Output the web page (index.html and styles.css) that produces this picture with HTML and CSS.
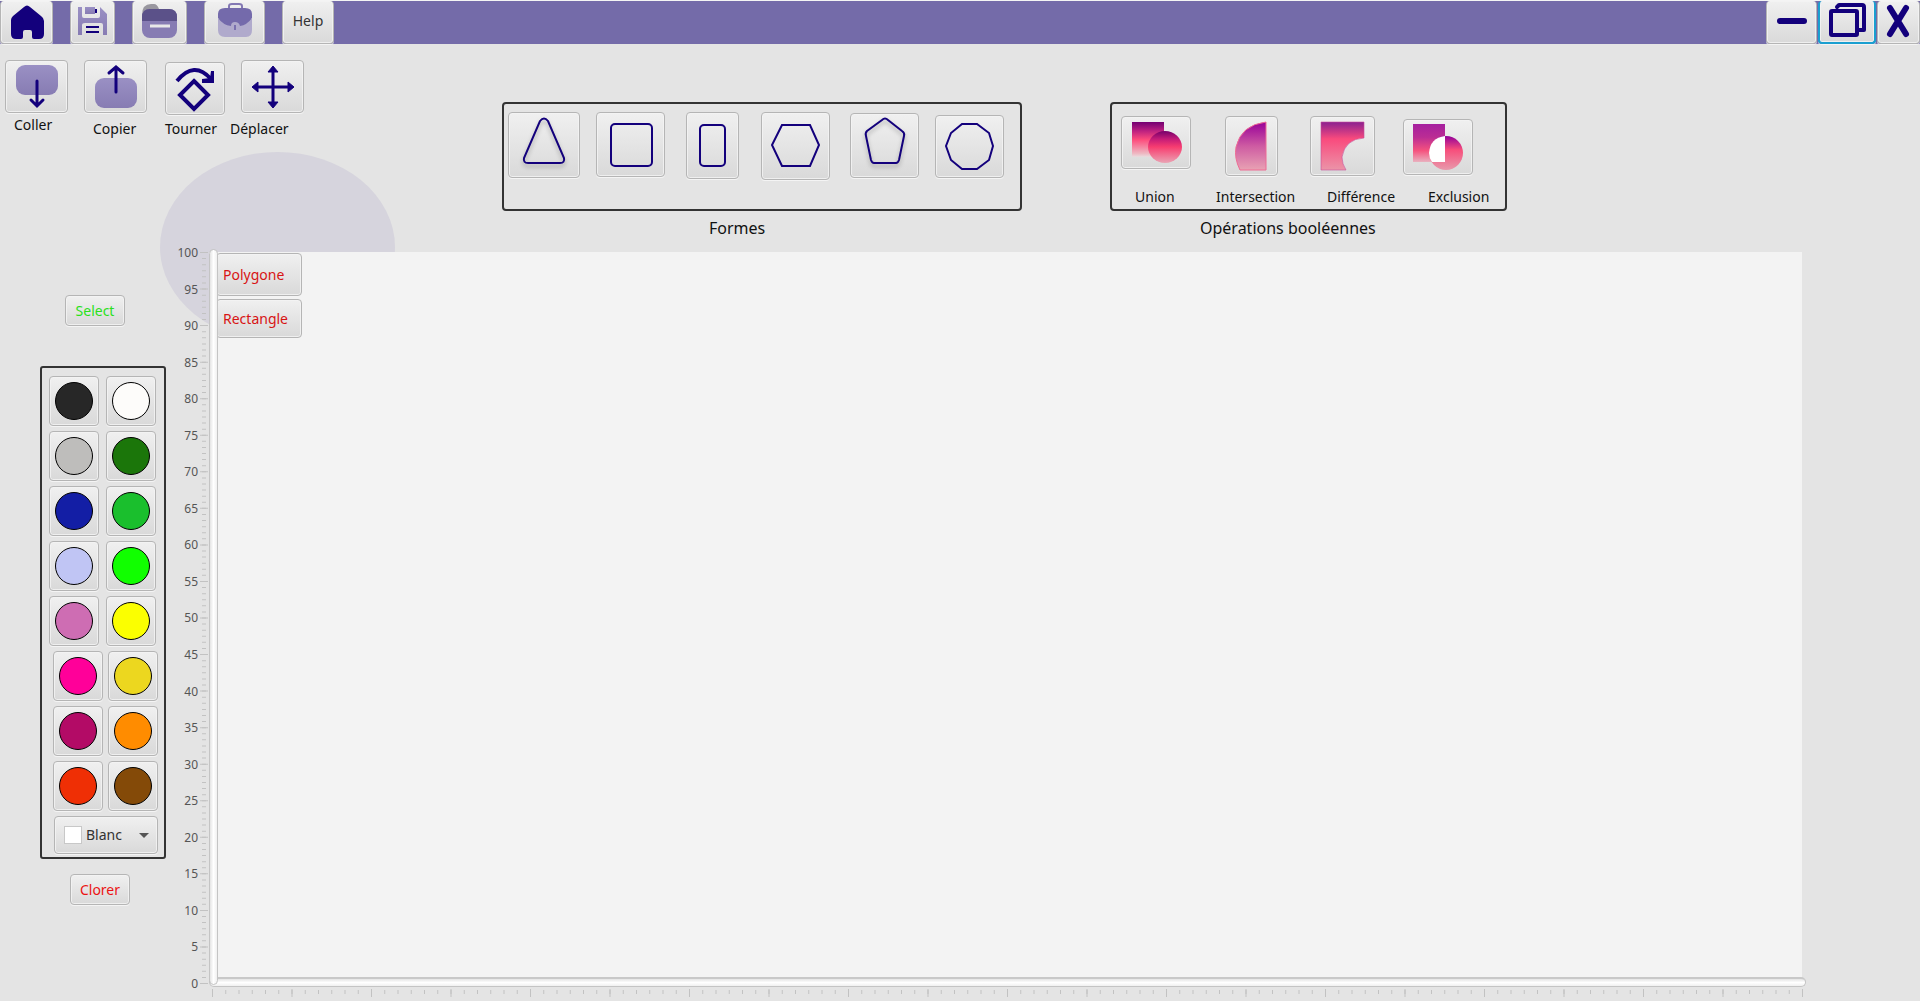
FILE: index.html
```html
<!DOCTYPE html>
<html lang="fr">
<head>
<meta charset="utf-8">
<title>Dessin</title>
<link rel="stylesheet" href="styles.css">
</head>
<body>
<header class="titlebar">
  <button class="btn bar-btn w-home" aria-label="Accueil"><svg width="51" height="42" viewBox="0 0 51 42"><path d="M10 19Q10 17 12 15L23 6Q26 3 29 6L40 15Q43 17 43 20V33Q43 38 38 38H33Q31 38 31 36V31Q31 29 29 29H24Q22 29 22 31V36Q22 38 20 38H15Q10 38 10 33Z" fill="#13007c"/></svg></button>
  <button class="btn bar-btn w-save" aria-label="Enregistrer"><svg width="43" height="42" viewBox="0 0 43 42"><defs><linearGradient id="lil" x1="0" y1="0" x2="0" y2="1"><stop offset="0" stop-color="#9a90c4"/><stop offset="1" stop-color="#877cb3"/></linearGradient></defs><path d="M7 6H11V15Q11 17 13 17H27Q29 17 29 15V6L36 13V34H32V24Q32 22 30 22H14Q11 22 11 24V34H7Z" fill="url(#lil)"/><path d="M14 6H24V13H14Z" fill="url(#lil)"/><path d="M25 8V12M15 26H28M15 31H28" stroke="#13007c" stroke-width="2"/></svg></button>
  <button class="btn bar-btn w-folder" aria-label="Ouvrir"><svg width="53" height="42" viewBox="0 0 53 42"><path d="M9 14Q9 3 18 3H21Q24 3 26 8L36 12V16H9Z" fill="#99979f"/><rect x="9" y="8" width="35" height="29" rx="8" fill="#877cb3"/><path d="M9 20V16Q9 8 17 8H36Q44 8 44 16V20Z" fill="#5b5189"/><path d="M17 25H37" stroke="#e8e8e8" stroke-width="3"/></svg></button>
  <button class="btn bar-btn w-case" aria-label="Projet"><svg width="59" height="42" viewBox="0 0 59 42"><path d="M24 7V5Q24 3 27 3H34Q37 3 37 5V7" fill="none" stroke="#8378b3" stroke-width="2"/><path d="M13 18V29Q13 36 20 36H41Q47 36 47 29V18Z" fill="#b0aacc"/><path d="M13 17V13Q13 7 20 7H40Q47 7 47 13V17Q42 24 35 25Q34 21 30 21Q26 21 26 25Q18 24 13 17Z" fill="#746aab"/><path d="M30 24V29" stroke="#7a70af" stroke-width="2"/></svg></button>
  <button class="btn bar-btn w-help">Help</button>
  <div class="window-controls">
    <button class="btn bar-btn w-min" aria-label="Réduire"><svg width="48" height="42" viewBox="0 0 48 42"><path d="M12 20H36" stroke="#13007c" stroke-width="6" stroke-linecap="round"/></svg></button>
    <button class="btn bar-btn w-max focused" aria-label="Restaurer"><svg width="54" height="42" viewBox="0 0 54 42"><g fill="none" stroke="#13007c" stroke-width="4" stroke-linejoin="round" stroke-linecap="round"><rect x="11" y="10" width="26" height="24" rx="1"/><path d="M17 6L19 4H42Q44 4 44 6V29H39"/></g></svg></button>
    <button class="btn bar-btn w-close" aria-label="Fermer"><svg width="40" height="42" viewBox="0 0 40 42"><path d="M11 7L27 33M27 7L11 33" stroke="#13007c" stroke-width="6" stroke-linecap="round"/></svg></button>
  </div>
</header>

<div class="halo"></div>

<section class="ribbon">
  <div class="tools">
    <div class="tool-buttons">
      <button class="btn w-tool" aria-labelledby="t1"><svg width="60" height="50" viewBox="0 0 60 50"><rect x="9" y="3" width="42" height="30" rx="9" fill="url(#lil)"/><path d="M30 19V43M24 38L30 44L36 38" fill="none" stroke="#13007c" stroke-width="3" stroke-linecap="round"/></svg></button>
      <button class="btn w-tool" aria-labelledby="t2"><svg width="60" height="50" viewBox="0 0 60 50"><rect x="9" y="16" width="42" height="30" rx="9" fill="url(#lil)"/><path d="M30 30V5M23 11L30 5L37 11" fill="none" stroke="#13007c" stroke-width="3" stroke-linecap="round"/></svg></button>
      <button class="btn w-turn" aria-labelledby="t3"><svg width="58" height="50" viewBox="0 0 58 50"><path d="M28 17L42 31L28 45L14 31Z" fill="none" stroke="#13007c" stroke-width="4"/><path d="M11 17Q28 -4 45 15" fill="none" stroke="#13007c" stroke-width="4"/><path d="M48 7V19H36V15L44 14L45 7Z" fill="#13007c"/></svg></button>
      <button class="btn w-tool" aria-labelledby="t4"><svg width="60" height="50" viewBox="0 0 60 50"><path d="M30 6V44M12 25H49" stroke="#13007c" stroke-width="3"/><path d="M30 4L35 10H25ZM30 46L25 40H35ZM9 25L15 20V30ZM51 25L45 20V30Z" fill="#13007c" stroke="#13007c" stroke-linejoin="round"/></svg></button>
    </div>
    <div class="tool-labels"><span id="t1" class="label-up">Coller</span><span id="t2">Copier</span><span id="t3">Tourner</span><span id="t4">Déplacer</span></div>
  </div>

  <figure class="group shapes">
    <div class="frame shape-frame">
      <button class="btn s-tri" aria-label="Triangle"><svg class="shadow" width="70" height="64" viewBox="0 0 70 64"><path d="M31 8Q35 3 39 8L55 45Q56 50 51 50H19Q14 50 15 45Z"/></svg></button>
      <button class="btn s-sq" aria-label="Carré"><svg width="67" height="63" viewBox="0 0 67 63"><rect x="14" y="11" width="41" height="42" rx="4"/></svg></button>
      <button class="btn s-rect" aria-label="Rectangle"><svg width="51" height="65" viewBox="0 0 51 65"><rect x="13" y="12" width="25" height="41" rx="4"/></svg></button>
      <button class="btn s-hex" aria-label="Hexagone"><svg width="67" height="66" viewBox="0 0 67 66"><path d="M20 12H48L57 32L48 53H20L10 32Z"/></svg></button>
      <button class="btn s-pent" aria-label="Pentagone"><svg class="shadow" width="67" height="63" viewBox="0 0 67 63"><path d="M31 6Q34 3 37 6L51 17Q54 19 53 22L48 46Q47 49 45 49H23Q21 49 20 46L15 22Q14 19 16 17Z"/></svg></button>
      <button class="btn s-deca" aria-label="Polygone"><svg width="67" height="61" viewBox="0 0 67 61"><path d="M26 8H41L53 17L57 30L53 44L41 53H26L15 44L10 30L15 17Z"/></svg></button>
    </div>
    <figcaption>Formes</figcaption>
  </figure>

  <figure class="group booleans">
    <div class="frame bool-frame">
      <svg width="0" height="0" class="defs"><defs>
        <linearGradient id="g1" x1="0" y1="0" x2="0" y2="1"><stop offset="0" stop-color="#730072"/><stop offset=".25" stop-color="#bb2080"/><stop offset=".5" stop-color="#fd4b7c"/><stop offset=".9" stop-color="#eeb8c2"/><stop offset="1" stop-color="#e8dddf"/></linearGradient>
        <linearGradient id="g2" x1="0" y1="0" x2="0" y2="1"><stop offset="0" stop-color="#75006b"/><stop offset=".25" stop-color="#c51b78"/><stop offset=".5" stop-color="#f83d70"/><stop offset="1" stop-color="#eaa4b4"/></linearGradient>
        <linearGradient id="g3" x1="0" y1="0" x2="0" y2="1"><stop offset="0" stop-color="#980099"/><stop offset=".5" stop-color="#ce5ba2"/><stop offset="1" stop-color="#e8a2b3"/></linearGradient>
        <linearGradient id="g4" x1="0" y1="0" x2="0" y2="1"><stop offset="0" stop-color="#8b2090"/><stop offset=".35" stop-color="#f94a7d"/><stop offset="1" stop-color="#eb94a8"/></linearGradient>
        <linearGradient id="g5" x1="0" y1="0" x2="0" y2="1"><stop offset="0" stop-color="#a5209f"/><stop offset=".35" stop-color="#bb2d94"/><stop offset=".7" stop-color="#f5527e"/><stop offset="1" stop-color="#e9b1bf"/></linearGradient>
        <linearGradient id="g6" x1="0" y1="0" x2="0" y2="1"><stop offset="0" stop-color="#92009a"/><stop offset=".4" stop-color="#f74d7b"/><stop offset="1" stop-color="#e89aac"/></linearGradient>
      </defs></svg>
      <button class="btn b-union" aria-labelledby="b1"><svg width="67" height="50" viewBox="0 0 67 50"><rect x="9" y="4" width="32" height="35" fill="url(#g1)"/><ellipse cx="42" cy="29" rx="17" ry="16" fill="url(#g2)"/></svg></button>
      <button class="btn b-inter" aria-labelledby="b2"><svg width="51" height="57" viewBox="0 0 51 57"><path d="M40 4V52H14Q8 40 10 29Q15 7 40 4Z" fill="url(#g3)" stroke="#ee6b94" stroke-width="1"/></svg></button>
      <button class="btn b-diff" aria-labelledby="b3"><svg width="62" height="57" viewBox="0 0 62 57"><path d="M9 4H52V20Q33 21 30 39Q30 46 34 52H9Z" fill="url(#g4)" stroke="#c84e99" stroke-opacity=".6" stroke-width="1"/></svg></button>
      <button class="btn b-excl" aria-labelledby="b4"><svg width="67" height="52" viewBox="0 0 67 52"><rect x="8" y="3" width="32" height="38" fill="url(#g5)"/><circle cx="41" cy="32" r="17" fill="url(#g6)"/><path d="M40 15V41H27Q24 37 24 32Q25 17 40 15Z" fill="#fff"/></svg></button>
      <span id="b1" class="l-union">Union</span><span id="b2" class="l-inter">Intersection</span><span id="b3" class="l-diff">Différence</span><span id="b4" class="l-excl">Exclusion</span>
    </div>
    <figcaption>Opérations booléennes</figcaption>
  </figure>
</section>

<main class="workspace">
  <aside class="sidebar">
    <button class="btn text-btn select-btn">Select</button>
    <div class="palette">
      <div class="swatches">
        <button class="btn swatch" aria-label="Noir"><span class="dot black"></span></button><button class="btn swatch" aria-label="Blanc"><span class="dot white"></span></button>
        <button class="btn swatch" aria-label="Gris"><span class="dot grey"></span></button><button class="btn swatch" aria-label="Vert foncé"><span class="dot forest"></span></button>
        <button class="btn swatch" aria-label="Bleu"><span class="dot blue"></span></button><button class="btn swatch" aria-label="Vert"><span class="dot green"></span></button>
        <button class="btn swatch" aria-label="Lavande"><span class="dot lavender"></span></button><button class="btn swatch" aria-label="Vert vif"><span class="dot lime"></span></button>
        <button class="btn swatch" aria-label="Mauve"><span class="dot mauve"></span></button><button class="btn swatch" aria-label="Jaune"><span class="dot yellow"></span></button>
      </div>
      <div class="swatches narrow">
        <button class="btn swatch" aria-label="Rose"><span class="dot pink"></span></button><button class="btn swatch" aria-label="Or"><span class="dot gold"></span></button>
        <button class="btn swatch" aria-label="Prune"><span class="dot plum"></span></button><button class="btn swatch" aria-label="Orange"><span class="dot orange"></span></button>
        <button class="btn swatch" aria-label="Rouge"><span class="dot red"></span></button><button class="btn swatch" aria-label="Marron"><span class="dot brown"></span></button>
      </div>
      <div class="picker"><select class="btn" aria-label="Couleur"><option>Blanc</option></select></div>
    </div>
    <button class="btn text-btn color-btn">Clorer</button>
  </aside>

  <div class="board">
    <div class="scale-labels"><span>100</span><span>95</span><span>90</span><span>85</span><span>80</span><span>75</span><span>70</span><span>65</span><span>60</span><span>55</span><span>50</span><span>45</span><span>40</span><span>35</span><span>30</span><span>25</span><span>20</span><span>15</span><span>10</span><span>5</span><span>0</span></div>
    <svg class="ticks-y" viewBox="0 0 8 732" preserveAspectRatio="none"><path d="M4 0V732" stroke-width="4" stroke-dasharray="1 5.0917"/><path d="M4 0V732" stroke-width="8" stroke-dasharray="1 35.55"/></svg>
    <div class="canvas">
      <button class="btn layer tall">Polygone</button>
      <button class="btn layer">Rectangle</button>
    </div>
    <input class="slider-x" type="range" aria-label="Position horizontale">
    <input class="slider-y" type="range" aria-label="Position verticale">
    <svg class="ticks-x" viewBox="0 0 1591 8" preserveAspectRatio="none"><path d="M0 3H1591" stroke-width="4" stroke-dasharray="1 12.25"/><path d="M0 4H1591" stroke-width="8" stroke-dasharray="1 78.5"/></svg>
  </div>
</main>
</body>
</html>
```
FILE: styles.css
```css
* { box-sizing: border-box; }

body {
  margin: 0;
  min-height: 100vh;
  display: flex;
  flex-direction: column;
  background: #e4e4e4;
  color: #111;
  font: 14px/20px "Noto Sans", "Open Sans", sans-serif;
}

svg { display: block; flex: none; }
.defs { position: absolute; }

.btn {
  display: flex;
  align-items: center;
  justify-content: center;
  flex: none;
  padding: 0;
  border: 1px solid #b5b5b5;
  border-radius: 4px;
  background: linear-gradient(#f0f0f0, #d9d9d9);
  box-shadow: inset 0 0 0 1px #f4f4f4cc, 0 1px 0 #f4f4f4;
  font: inherit;
  color: #333;
}

/* Title bar */
.titlebar {
  display: flex;
  gap: 17px;
  height: 44px;
  border-top: 1px solid #f4f4f4;
  background: #746ba9;
}
.bar-btn { height: 43px; border-top: 0; }
.w-home { width: 53px; }
.w-save { width: 45px; }
.w-folder { width: 55px; }
.w-case { width: 61px; }
.w-help { width: 52px; padding-bottom: 2px; }
.window-controls { display: flex; gap: 1px; margin-left: auto; }
.w-min { width: 51px; }
.w-max { width: 58px; }
.w-close { width: 43px; }
.focused { border: 2px solid #1a9fd0; border-top: 0; }

.halo {
  position: absolute;
  z-index: -1;
  left: 160px;
  top: 152px;
  width: 235px;
  height: 190px;
  border-radius: 50%;
  background: #d6d4dd;
}

/* Ribbon */
.ribbon { display: flex; align-items: flex-start; height: 205px; }
.tools { width: 502px; padding: 16px 0 0 5px; }
.tool-buttons { display: flex; gap: 16px; }
.tool-buttons .btn { height: 53px; }
.w-tool { width: 63px; }
.w-turn { width: 60px; margin: 2px 0 -2px 2px; }
.tool-labels {
  display: grid;
  grid-template-columns: 79px 72px 65px auto;
  margin: 6px 0 0 9px;
}
.label-up { margin-top: -4px; }

.group { margin: 58px 0 0; }
.group figcaption { margin-top: 5px; font-size: 16px; line-height: 24px; }
.shapes { width: 520px; }
.shapes figcaption { padding-left: 207px; }
.booleans { width: 397px; margin-left: 88px; }
.booleans figcaption { padding-left: 90px; }
.frame {
  height: 109px;
  border: 2px solid #333;
  border-radius: 4px;
}
.shape-frame {
  display: flex;
  align-items: flex-start;
  padding: 8px 4px;
}
.shape-frame path,
.shape-frame rect { fill: none; stroke: #13007c; stroke-width: 2; }
.shadow { filter: drop-shadow(0 3px 2px #0004); }
.s-tri { width: 72px; height: 66px; margin-right: 16px; }
.s-sq { width: 69px; height: 65px; margin-right: 21px; }
.s-rect { width: 53px; height: 67px; margin-right: 22px; }
.s-hex { width: 69px; height: 68px; margin-right: 20px; }
.s-pent { width: 69px; height: 65px; margin: 1px 16px 0 0; }
.s-deca { width: 69px; height: 63px; margin-top: 3px; }

.bool-frame {
  display: grid;
  grid-template: 71px 20px / 95px 94px 101px 1fr;
  align-items: start;
  padding: 12px 0 0 9px;
}
.b-union { width: 70px; height: 53px; }
.b-inter { width: 53px; height: 60px; margin-left: 9px; }
.b-diff { width: 65px; height: 60px; }
.b-excl { width: 70px; height: 56px; margin: 3px 0 0 -8px; }
.l-union { padding-left: 14px; }
.l-diff { padding-left: 17px; }
.l-excl { padding-left: 17px; }

/* Workspace */
.workspace { flex: 1; display: flex; }
.sidebar { width: 170px; padding-top: 46px; }
.text-btn { width: 60px; height: 31px; }
.select-btn { margin-left: 65px; color: #2be01c; }
.color-btn { margin: 15px 0 0 70px; color: #ec1313; }
.palette {
  width: 126px;
  margin: 40px 0 0 40px;
  padding: 8px 0 3px 7px;
  border: 2px solid #333;
  border-radius: 3px;
}
.swatches {
  display: grid;
  grid-template-columns: 50px 50px;
  gap: 5px 7px;
  padding-bottom: 5px;
}
.narrow { padding-left: 4px; column-gap: 5px; }
.swatch { height: 50px; }
.dot {
  width: 38px;
  height: 38px;
  border: 1px solid #000;
  border-radius: 50%;
}
.black { background: #272727; }
.white { background: #fdfcfa; }
.grey { background: #bebdbb; }
.forest { background: #1b760a; }
.blue { background: #131ea5; }
.green { background: #1abf2d; }
.lavender { background: #c0c5f4; }
.lime { background: #11ff00; }
.mauve { background: #ce6db3; }
.yellow { background: #fbff00; }
.pink { background: #ff0099; }
.gold { background: #ecd71f; }
.plum { background: #b30b66; }
.orange { background: #ff8c00; }
.red { background: #ef2f05; }
.brown { background: #844a08; }

.picker { position: relative; margin-left: 5px; }
.picker select {
  width: 104px;
  height: 38px;
  padding-left: 31px;
  appearance: none;
}
.picker::before {
  content: "";
  position: absolute;
  left: 10px;
  top: 10px;
  width: 16px;
  height: 16px;
  border: 1px solid #c8c8c8;
  background: #fff;
}
.picker::after {
  content: "";
  position: absolute;
  left: 85px;
  top: 17px;
  border: 5px solid transparent;
  border-top-color: #555;
  border-bottom: 0;
}

/* Drawing board with its two sliders */
.board {
  flex: 1;
  display: grid;
  grid-template: 3px 1fr 10px 14px / 28px 2px 8px 1px 9px 1fr;
  margin-right: 118px;
}
.scale-labels {
  grid-area: 1 / 1 / 4 / 2;
  display: flex;
  flex-direction: column;
  justify-content: space-between;
  margin: -4px 0 -5px;
  font-size: 12px;
  line-height: 16px;
  text-align: right;
  color: #555;
}
.ticks-y, .ticks-x { width: 100%; height: 100%; fill: none; stroke: #c2c2c2; }
.ticks-y { grid-area: 2 / 3 / 4 / 4; height: calc(100% - 3px); }
.ticks-x { grid-area: 4 / 5 / 5 / 7; width: calc(100% - 2px); height: 8px; margin: 2px 0 0 3px; }
.canvas {
  grid-area: 2 / 5 / 3 / 7;
  padding: 1px 0 0 7px;
  background: #f3f3f3;
}
.layer {
  width: 86px;
  height: 39px;
  margin-bottom: 3px;
  padding-left: 6px;
  justify-content: flex-start;
  color: #d81414;
}
.tall { height: 43px; }
.slider-x, .slider-y {
  appearance: none;
  min-width: 0;
  margin: 0;
  border: 1px solid #c4c4c4;
  border-radius: 5px;
}
.slider-x {
  grid-area: 3 / 5 / 4 / 7;
  width: calc(100% + 4px);
  height: 10px;
  border-top: 2px solid #c8c8c8;
  background: linear-gradient(#e4e4e4, #fff 50%, #f0f0f0);
}
.slider-y {
  grid-area: 1 / 5 / 4 / 6;
  writing-mode: vertical-lr;
  width: 9px;
  height: calc(100% - 2px);
  background: linear-gradient(90deg, #e4e4e4, #fff 50%, #f0f0f0);
}
.slider-x::-webkit-slider-thumb, .slider-y::-webkit-slider-thumb {
  appearance: none;
  width: 0;
  height: 0;
}
```
